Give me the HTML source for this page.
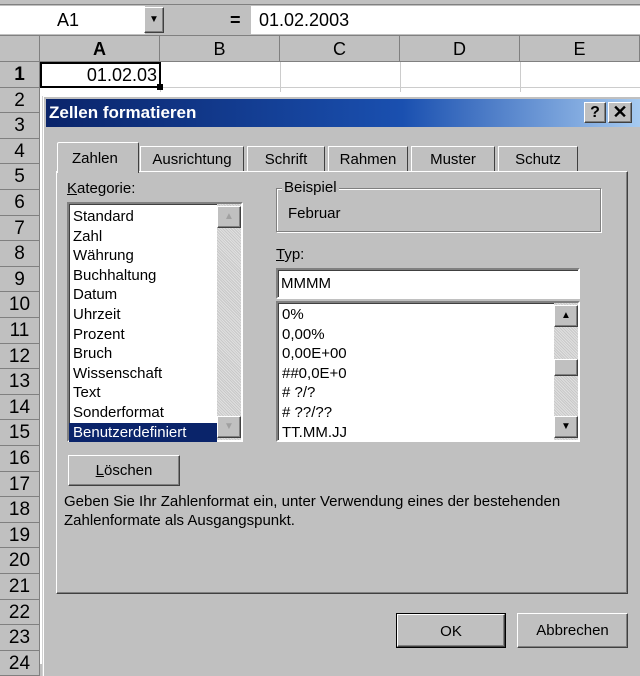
<!DOCTYPE html>
<html><head><meta charset="utf-8"><style>
*{margin:0;padding:0;box-sizing:border-box}
body{width:640px;height:664px;overflow:hidden;background:#c0c0c0;font-family:"Liberation Sans",sans-serif;position:relative;font-size:15px;color:#000}
.a{position:absolute}
.raised{border:1px solid;border-color:#fff #404040 #404040 #fff;box-shadow:inset -1px -1px 0 #808080}
.sunken{border:2px solid;border-color:#808080 #fff #fff #808080;box-shadow:inset 1px 1px 0 #404040}
.rh{position:absolute;left:0;width:40px;height:25.6px;border-bottom:1px solid #808080;border-right:1px solid #808080;text-align:center;font-size:19px;line-height:25px;background:#c0c0c0}
.ch{position:absolute;top:36px;height:26px;border-right:1px solid #808080;text-align:center;font-size:18px;line-height:26px}
.li{height:19.6px;line-height:19.6px;padding-left:4px;white-space:nowrap}
.sb{background-image:repeating-linear-gradient(45deg,#e0e0e0 0 1px,#c8c8c8 1px 2px);}
.btn{position:absolute;background:#c0c0c0;text-align:center}
</style></head><body>
<div class="a" style="left:0;top:0;width:640px;height:5px;background:#c0c0c0;border-bottom:1px solid #808080"></div>
<div class="a" style="left:0;top:6px;width:145px;height:28px;background:#fff;font-size:18px;line-height:28px;padding-left:57px">A1</div>
<div class="a raised" style="left:144px;top:7px;width:20px;height:26px;background:#c0c0c0;font-size:10px;text-align:center;line-height:24px">▼</div>
<div class="a" style="left:230px;top:6px;font-size:18px;line-height:28px;font-weight:bold">=</div>
<div class="a" style="left:251px;top:6px;width:389px;height:28px;background:#fff;font-size:18px;line-height:28px;padding-left:8px">01.02.2003</div>
<div class="a" style="left:0;top:35px;width:640px;height:1px;background:#808080"></div>
<div class="a" style="left:40px;top:62px;width:600px;height:602px;background:#fff"></div>
<div class="a" style="left:0;top:36px;width:40px;height:26px;border-right:1px solid #808080;border-bottom:1px solid #808080"></div>
<div class="ch" style="left:40px;width:120px;font-weight:bold">A</div>
<div class="ch" style="left:160px;width:120px">B</div>
<div class="ch" style="left:280px;width:120px">C</div>
<div class="ch" style="left:400px;width:120px">D</div>
<div class="ch" style="left:520px;width:120px">E</div>
<div class="a" style="left:0;top:61px;width:640px;height:1px;background:#808080"></div>
<div class="a" style="left:160px;top:62px;width:1px;height:30px;background:#ccc"></div>
<div class="a" style="left:280px;top:62px;width:1px;height:30px;background:#ccc"></div>
<div class="a" style="left:400px;top:62px;width:1px;height:30px;background:#ccc"></div>
<div class="a" style="left:520px;top:62px;width:1px;height:30px;background:#ccc"></div>
<div class="a" style="left:40px;top:87px;width:600px;height:1px;background:#ccc"></div>
<div class="a" style="left:40px;top:62px;width:121px;height:26px;border:2px solid #000;text-align:right;font-size:18px;line-height:22px;padding-right:2px">01.02.03</div>
<div class="a" style="left:157px;top:84px;width:6px;height:6px;background:#000"></div>
<div class="rh" style="top:62px;font-weight:bold">1</div>
<div class="rh" style="top:87.6px">2</div><div class="rh" style="top:113.2px">3</div><div class="rh" style="top:138.8px">4</div><div class="rh" style="top:164.4px">5</div><div class="rh" style="top:190px">6</div><div class="rh" style="top:215.6px">7</div><div class="rh" style="top:241.2px">8</div><div class="rh" style="top:266.8px">9</div><div class="rh" style="top:292.4px">10</div><div class="rh" style="top:318px">11</div><div class="rh" style="top:343.6px">12</div><div class="rh" style="top:369.2px">13</div><div class="rh" style="top:394.8px">14</div><div class="rh" style="top:420.4px">15</div><div class="rh" style="top:446px">16</div><div class="rh" style="top:471.6px">17</div><div class="rh" style="top:497.2px">18</div><div class="rh" style="top:522.8px">19</div><div class="rh" style="top:548.4px">20</div><div class="rh" style="top:574px">21</div><div class="rh" style="top:599.6px">22</div><div class="rh" style="top:625.2px">23</div><div class="rh" style="top:650.8px">24</div>

<!-- dialog -->
<div class="a" style="left:43px;top:96px;width:600px;height:580px;background:#c0c0c0;border-left:1px solid #fff;border-top:1px solid #fff;box-shadow:-1px 0 0 #d0d0d0"></div>
<div class="a" style="left:46px;top:99px;width:594px;height:28px;background:linear-gradient(90deg,#0a246a,#1a50b0 60%,#a6caf0);color:#fff;font-weight:bold;font-size:17px;line-height:28px;padding-left:3px">Zellen formatieren</div>
<div class="a raised" style="left:584px;top:102px;width:22px;height:21px;background:#c0c0c0;font-weight:bold;font-size:16px;text-align:center;line-height:19px">?</div>
<div class="a raised" style="left:608px;top:102px;width:24px;height:21px;background:#c0c0c0;font-weight:bold;font-size:18px;text-align:center;line-height:19px">✕</div>

<!-- tab panel -->
<div class="a" style="left:56px;top:171px;width:572px;height:423px;border:1px solid;border-color:#fff #404040 #404040 #fff;box-shadow:inset -1px -1px 0 #808080"></div>
<div class="a" style="left:57px;top:142px;width:82px;height:31px;background:#c0c0c0;border:1px solid;border-color:#fff #404040 transparent #fff;border-bottom:none;border-radius:2px 2px 0 0;font-size:15px;line-height:32px;padding-left:14px">Zahlen</div>
<div class="a" style="left:140px;top:146px;width:104px;height:25px;border:1px solid;border-color:#fff #404040 transparent #fff;border-bottom:none;line-height:25px;text-align:center">Ausrichtung</div>
<div class="a" style="left:247px;top:146px;width:78px;height:25px;border:1px solid;border-color:#fff #404040 transparent #fff;border-bottom:none;line-height:25px;text-align:center">Schrift</div>
<div class="a" style="left:328px;top:146px;width:80px;height:25px;border:1px solid;border-color:#fff #404040 transparent #fff;border-bottom:none;line-height:25px;text-align:center">Rahmen</div>
<div class="a" style="left:411px;top:146px;width:84px;height:25px;border:1px solid;border-color:#fff #404040 transparent #fff;border-bottom:none;line-height:25px;text-align:center">Muster</div>
<div class="a" style="left:498px;top:146px;width:80px;height:25px;border:1px solid;border-color:#fff #404040 transparent #fff;border-bottom:none;line-height:25px;text-align:center">Schutz</div>

<div class="a" style="left:67px;top:180px"><u>K</u>ategorie:</div>
<div class="a sunken" style="left:67px;top:202px;width:176px;height:240px;background:#fff;padding-top:3px">
<div class="li">Standard</div><div class="li">Zahl</div><div class="li">Währung</div><div class="li">Buchhaltung</div><div class="li">Datum</div><div class="li">Uhrzeit</div><div class="li">Prozent</div><div class="li">Bruch</div><div class="li">Wissenschaft</div><div class="li">Text</div><div class="li">Sonderformat</div><div class="li" style="background:#0a246a;color:#fff;width:148px">Benutzerdefiniert</div>
<div class="a sb" style="left:148px;top:0;width:24px;height:236px"></div>
<div class="a raised" style="left:148px;top:2px;width:24px;height:22px;background:#c0c0c0;color:#a0a0a0;font-size:10px;text-align:center;line-height:20px">▲</div>
<div class="a raised" style="left:148px;top:212px;width:24px;height:22px;background:#c0c0c0;color:#a0a0a0;font-size:10px;text-align:center;line-height:20px">▼</div>
</div>

<div class="a" style="left:276px;top:188px;width:325px;height:44px;border:1px solid #808080;box-shadow:1px 1px 0 #fff,inset 1px 1px 0 #fff"></div>
<div class="a" style="left:282px;top:179px;background:#c0c0c0;padding:0 2px">Beispiel</div>
<div class="a" style="left:288px;top:205px">Februar</div>
<div class="a" style="left:276px;top:246px"><u>T</u>yp:</div>
<div class="a sunken" style="left:276px;top:268px;width:304px;height:31px;background:#fff;padding-left:3px;line-height:27px">MMMM</div>
<div class="a sunken" style="left:276px;top:301px;width:304px;height:141px;background:#fff;padding-top:2px">
<div class="li">0%</div><div class="li">0,00%</div><div class="li">0,00E+00</div><div class="li">##0,0E+0</div><div class="li"># ?/?</div><div class="li"># ??/??</div><div class="li">TT.MM.JJ</div>
<div class="a sb" style="left:276px;top:0;width:24px;height:137px"></div>
<div class="a raised" style="left:276px;top:2px;width:24px;height:22px;background:#c0c0c0;font-size:10px;text-align:center;line-height:20px">▲</div>
<div class="a raised" style="left:276px;top:56px;width:24px;height:17px;background:#c0c0c0"></div>
<div class="a raised" style="left:276px;top:113px;width:24px;height:22px;background:#c0c0c0;font-size:10px;text-align:center;line-height:20px">▼</div>
</div>

<div class="btn raised" style="left:68px;top:455px;width:112px;height:31px;line-height:29px"><u>L</u>öschen</div>
<div class="a" style="left:64px;top:492px;line-height:19px">Geben Sie Ihr Zahlenformat ein, unter Verwendung eines der bestehenden<br>Zahlenformate als Ausgangspunkt.</div>

<div class="btn" style="left:396px;top:613px;width:110px;height:35px;border:1px solid #000;line-height:33px"><div class="raised" style="height:33px">OK</div></div>
<div class="btn raised" style="left:517px;top:613px;width:111px;height:35px;line-height:33px">Abbrechen</div>
</body></html>
